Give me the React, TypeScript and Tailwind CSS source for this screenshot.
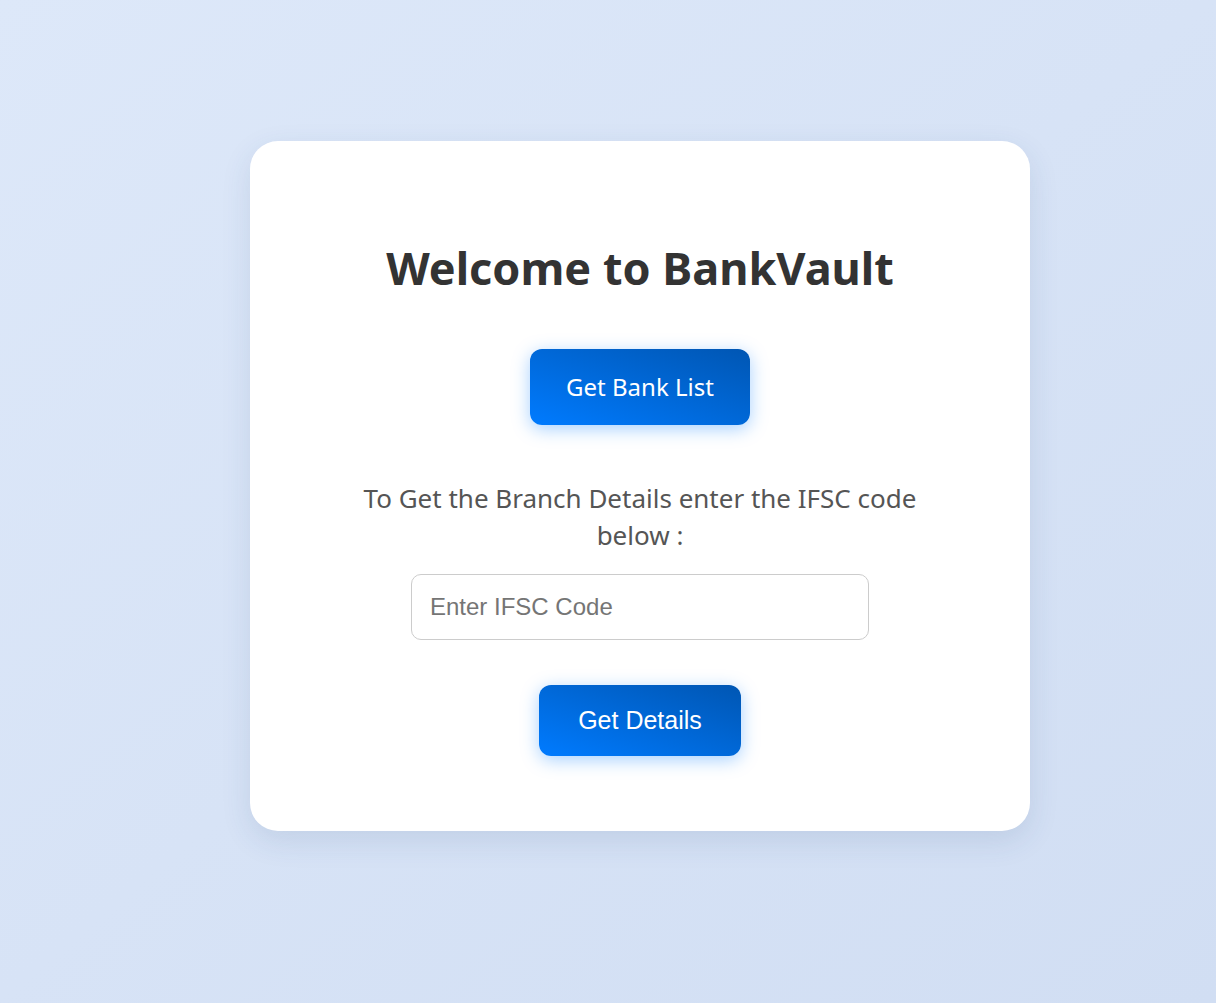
export default function App() {
  return (
    <div className="min-h-screen w-full bg-gradient-to-br from-[#dde8f9] to-[#d1def3] pl-16 pt-[141px] pb-10 flex justify-center items-start font-['Noto_Sans',sans-serif]">
      <div className="w-[780px] rounded-[28px] bg-white pt-[98px] pb-[75px] flex flex-col items-center shadow-[0_10px_30px_rgba(40,70,120,0.12)]">
        <h1 className="text-[45px] leading-[58px] font-bold text-[#333]">Welcome to BankVault</h1>
        <button
          type="button"
          className="mt-[52px] h-[76px] w-[220px] rounded-xl bg-gradient-to-tr from-[#007bff] to-[#0056b3] text-[24px] text-white shadow-[0_4px_18px_rgba(0,123,255,0.35)]"
        >
          Get Bank List
        </button>
        <p className="mt-[55px] w-[600px] text-center text-[26px] leading-[37px] text-[#555]">
          To Get the Branch Details enter the IFSC code below :
        </p>
        <input
          type="text"
          placeholder="Enter IFSC Code"
          className="mt-5 h-[66px] w-[458px] rounded-[10px] border border-[#ccc] px-[18px] text-[24px] font-['Liberation_Sans',Arial,sans-serif] text-[#333] placeholder:text-[#757575] outline-none"
        />
        <button
          type="button"
          className="mt-[45px] h-[71px] w-[202px] rounded-xl bg-gradient-to-tr from-[#007bff] to-[#0056b3] text-[25px] text-white font-['Liberation_Sans',Arial,sans-serif] shadow-[0_4px_18px_rgba(0,123,255,0.35)]"
        >
          Get Details
        </button>
      </div>
    </div>
  );
}
